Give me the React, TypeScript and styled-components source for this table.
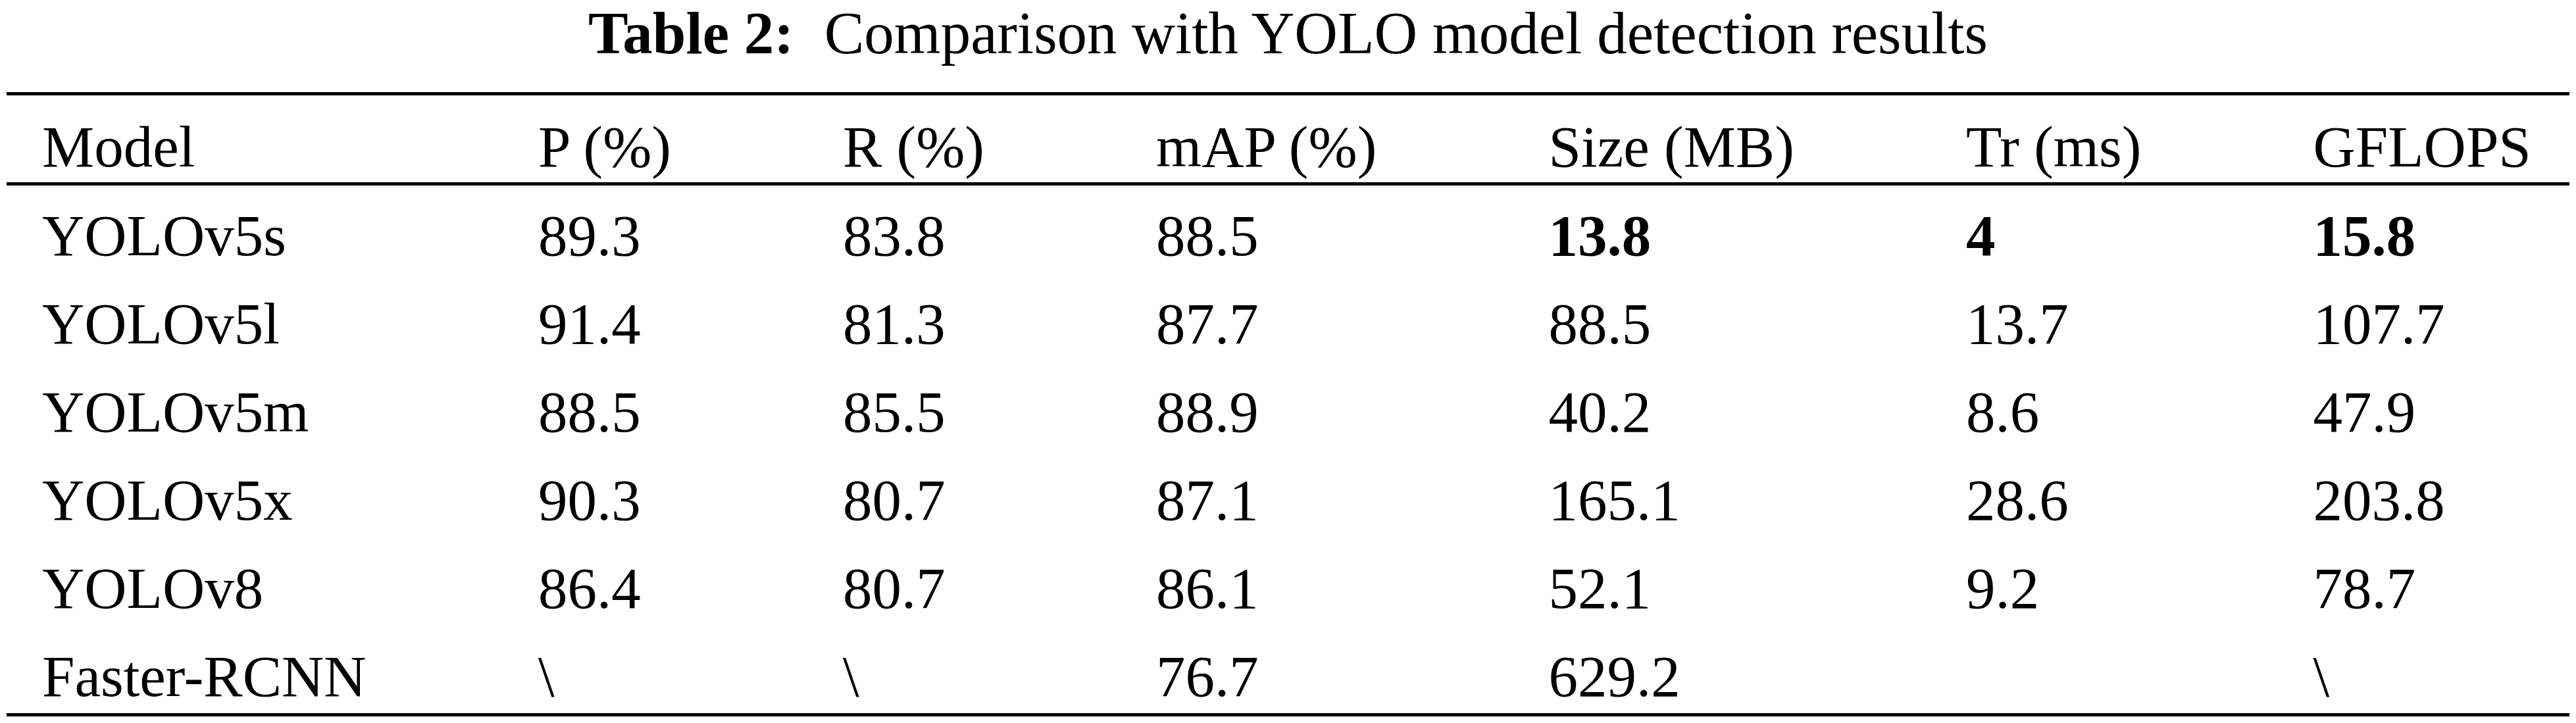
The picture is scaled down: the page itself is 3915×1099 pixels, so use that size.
import styled, { createGlobalStyle } from "styled-components";

const GlobalStyle = createGlobalStyle`
  html, body {
    margin: 0;
    padding: 0;
    background: #ffffff;
  }
  body {
    font-family: "Liberation Serif", "Times New Roman", serif;
    color: #000000;
  }
`;

const Page = styled.div`
  display: flex;
  flex-direction: column;
  width: 3895px;
  padding: 0 10px;
`;

const Caption = styled.div`
  font-size: 91px;
  line-height: 101px;
  text-align: center;
  margin-bottom: 39px;
  white-space: nowrap;
`;

const CaptionLabel = styled.span`
  font-weight: 700;
  margin-right: 46px;
`;

const Table = styled.table`
  width: 100%;
  border-collapse: separate;
  border-spacing: 0;
  font-size: 89px;
  line-height: 100px;
`;

const HeadCell = styled.th`
  font-weight: 400;
  text-align: left;
  white-space: nowrap;
  padding: 28px 130px 4px;
  border-top: 5px solid #000;
  border-bottom: 5px solid #000;
  &:first-child {
    padding-left: 54px;
  }
  &:last-child {
    padding-right: 57px;
  }
`;

const Cell = styled.td<{ $bold?: boolean; $last?: boolean }>`
  text-align: left;
  white-space: nowrap;
  font-weight: ${(p) => (p.$bold ? 700 : 400)};
  padding: 26px 130px ${(p) => (p.$last ? "6px" : "8px")};
  border-bottom: ${(p) => (p.$last ? "5px solid #000" : "none")};
  &:first-child {
    padding-left: 54px;
  }
  &:last-child {
    padding-right: 57px;
  }
`;

const columns = ["Model", "P (%)", "R (%)", "mAP (%)", "Size (MB)", "Tr (ms)", "GFLOPS"];

type Row = { cells: string[]; bold?: number[] };

const rows: Row[] = [
  { cells: ["YOLOv5s", "89.3", "83.8", "88.5", "13.8", "4", "15.8"], bold: [4, 5, 6] },
  { cells: ["YOLOv5l", "91.4", "81.3", "87.7", "88.5", "13.7", "107.7"] },
  { cells: ["YOLOv5m", "88.5", "85.5", "88.9", "40.2", "8.6", "47.9"] },
  { cells: ["YOLOv5x", "90.3", "80.7", "87.1", "165.1", "28.6", "203.8"] },
  { cells: ["YOLOv8", "86.4", "80.7", "86.1", "52.1", "9.2", "78.7"] },
  { cells: ["Faster-RCNN", "\\", "\\", "76.7", "629.2", "", "\\"] },
];

export default function App() {
  return (
    <Page>
      <GlobalStyle />
      <Caption>
        <CaptionLabel>Table 2:</CaptionLabel>Comparison with YOLO model detection results
      </Caption>
      <Table>
        <thead>
          <tr>
            {columns.map((c) => (
              <HeadCell key={c}>{c}</HeadCell>
            ))}
          </tr>
        </thead>
        <tbody>
          {rows.map((r, i) => (
            <tr key={r.cells[0]}>
              {r.cells.map((v, j) => (
                <Cell key={j} $bold={r.bold?.includes(j)} $last={i === rows.length - 1}>
                  {v}
                </Cell>
              ))}
            </tr>
          ))}
        </tbody>
      </Table>
    </Page>
  );
}
